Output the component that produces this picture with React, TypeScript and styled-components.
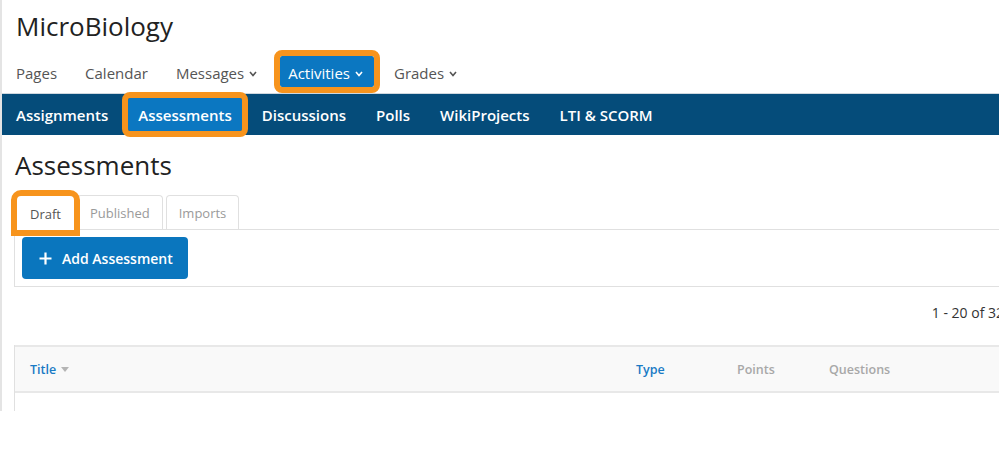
import React from "react";
import styled, { createGlobalStyle } from "styled-components";

const GlobalStyle = createGlobalStyle`
    body {
        margin: 0;
        overflow: hidden;
        background: #fff;
        font-family: "Open Sans", "DejaVu Sans", sans-serif;
    }
`;

const Page = styled.div`
    width: 1040px;
    height: 411px;
    overflow: hidden;
    border-left: 2px solid #e4e4e4;
    display: flex;
    flex-direction: column;
`;

const CourseTitle = styled.h1`
    margin: 0;
    padding: 8px 0 0 14px;
    font-size: 26px;
    line-height: 37px;
    font-weight: 400;
    color: #222;
`;

const TopNav = styled.nav`
    display: flex;
    gap: 12px;
    padding: 11px 0 6px 6px;
`;

const TopNavItem = styled.div<{ $active?: boolean }>`
    display: flex;
    align-items: center;
    height: 31px;
    padding: 2px 8px 0;
    box-sizing: border-box;
    font-size: 15px;
    color: ${p => (p.$active ? "#fff" : "#555")};
    background: ${p => (p.$active ? "#0b77c1" : "transparent")};
    outline: ${p => (p.$active ? "6px solid #f7941d" : "none")};
    border-radius: 2px;
`;

const Chevron = styled.svg`
    margin: 3px 3px 0 5px;
`;

const SubNav = styled.nav`
    display: flex;
    align-items: center;
    gap: 10px;
    height: 42px;
    padding-left: 4px;
    background: #054c7a;
    border-top: 1px solid #cfd8df;
    box-sizing: border-box;
`;

const SubNavItem = styled.div<{ $active?: boolean }>`
    display: flex;
    align-items: center;
    height: 33px;
    padding: 0 10px;
    font-size: 15px;
    font-weight: 600;
    color: #fff;
    background: ${p => (p.$active ? "#0b77c1" : "transparent")};
    outline: ${p => (p.$active ? "6px solid #f7941d" : "none")};
    border-radius: 2px;
`;

const Content = styled.div<{ $grow?: boolean }>`
    padding-left: 12px;
    display: flex;
    flex-direction: column;
    flex: ${p => (p.$grow ? 1 : "none")};
`;

const Heading = styled.h2`
    margin: 12px 0 0 1px;
    font-size: 26px;
    line-height: 37px;
    font-weight: 400;
    color: #222;
`;

const Tabs = styled.div`
    display: flex;
    align-items: flex-end;
    gap: 3px;
    margin-top: 11px;
    padding-left: 3px;
`;

const Tab = styled.div<{ $active?: boolean }>`
    display: flex;
    align-items: center;
    height: 34px;
    padding: 0 12px;
    box-sizing: border-box;
    font-size: 13px;
    color: ${p => (p.$active ? "#555" : "#9a9a9a")};
    background: #fff;
    border: 1px solid ${p => (p.$active ? "#fff" : "#e0e0e0")};
    border-bottom: none;
    border-radius: 4px 4px 0 0;
    margin-bottom: ${p => (p.$active ? "-1px" : "0")};
    outline: ${p => (p.$active ? "6px solid #f7941d" : "none")};
    position: relative;
    z-index: ${p => (p.$active ? 1 : 0)};
`;

const Panel = styled.div`
    border: 1px solid #e0e0e0;
    padding: 7px;
`;

const AddButton = styled.button`
    display: flex;
    align-items: center;
    gap: 10px;
    height: 42px;
    width: 166px;
    padding: 0 0 0 17px;
    border: none;
    border-radius: 4px;
    background: #0a76be;
    color: #fff;
    font-family: inherit;
    font-size: 14px;
    font-weight: 600;
`;

const Pager = styled.div`
    height: 58px;
    box-sizing: border-box;
    padding: 16px 38px 0 0;
    text-align: right;
    font-size: 14px;
    line-height: 20px;
    color: #333;
`;

const Table = styled.div`
    flex: 1;
    border-left: 1px solid #e0e0e0;
`;

const HeaderRow = styled.div`
    display: grid;
    grid-template-columns: 606px 101px 92px 1fr;
    align-items: center;
    height: 48px;
    box-sizing: border-box;
    padding-left: 15px;
    background: #f9f9f9;
    border-top: 2px solid #e8e8e8;
    border-bottom: 2px solid #e8e8e8;
`;

const HeaderCell = styled.div<{ $link?: boolean }>`
    display: flex;
    align-items: center;
    gap: 5px;
    font-size: 12.5px;
    font-weight: 600;
    color: ${p => (p.$link ? "#1a7bc5" : "#a8a8a8")};
`;

const SortArrow = styled.span`
    width: 0;
    height: 0;
    border-left: 4px solid transparent;
    border-right: 4px solid transparent;
    border-top: 5px solid #b5b5b5;
    margin-top: 1px;
`;

const ChevronIcon = () => (
    <Chevron width="8" height="6" viewBox="0 0 8 6">
        <polyline points="1,1 4,4.5 7,1" fill="none" stroke="currentColor" strokeWidth="1.6" />
    </Chevron>
);

const topNav = [
    { label: "Pages" },
    { label: "Calendar" },
    { label: "Messages", menu: true },
    { label: "Activities", menu: true, active: true },
    { label: "Grades", menu: true },
];

const subNav = ["Assignments", "Assessments", "Discussions", "Polls", "WikiProjects", "LTI & SCORM"];

const tabs = ["Draft", "Published", "Imports"];

const columns = [
    { label: "Title", link: true, sort: true },
    { label: "Type", link: true },
    { label: "Points" },
    { label: "Questions" },
];

export default function App() {
    return (
        <>
            <GlobalStyle />
            <Page>
                <CourseTitle>MicroBiology</CourseTitle>
                <TopNav>
                    {topNav.map(item => (
                        <TopNavItem key={item.label} $active={item.active}>
                            {item.label}
                            {item.menu ? <ChevronIcon /> : null}
                        </TopNavItem>
                    ))}
                </TopNav>
                <SubNav>
                    {subNav.map(label => (
                        <SubNavItem key={label} $active={label === "Assessments"}>
                            {label}
                        </SubNavItem>
                    ))}
                </SubNav>
                <Content>
                    <Heading>Assessments</Heading>
                    <Tabs>
                        {tabs.map((label, i) => (
                            <Tab key={label} $active={i === 0}>
                                {label}
                            </Tab>
                        ))}
                    </Tabs>
                    <Panel>
                        <AddButton>
                            <svg width="13" height="13" viewBox="0 0 13 13">
                                <path d="M6.5 0.5v12M0.5 6.5h12" stroke="#fff" strokeWidth="2.2" />
                            </svg>
                            Add Assessment
                        </AddButton>
                    </Panel>
                    <Pager>1 - 20 of 32</Pager>
                </Content>
                <Content $grow>
                    <Table>
                        <HeaderRow>
                            {columns.map(col => (
                                <HeaderCell key={col.label} $link={col.link}>
                                    {col.label}
                                    {col.sort ? <SortArrow /> : null}
                                </HeaderCell>
                            ))}
                        </HeaderRow>
                    </Table>
                </Content>
            </Page>
        </>
    );
}
